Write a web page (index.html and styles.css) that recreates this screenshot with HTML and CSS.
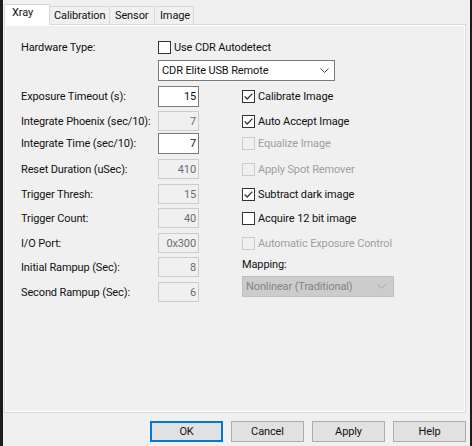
FILE: index.html
```html
<!DOCTYPE html>
<html>
<head>
<meta charset="utf-8">
<link rel="stylesheet" href="styles.css">
</head>
<body>
<div class="window">
  <div class="tabs">
    <div class="tab active t-xray">Xray</div>
    <div class="tab t-cal">Calibration</div>
    <div class="tab t-sen">Sensor</div>
    <div class="tab t-img">Image</div>
  </div>
  <div class="panel">
    <div class="form">
      <div class="lbl h13">Hardware Type:</div>
      <div class="chk h13 span2">
        <svg class="box" width="13" height="13" viewBox="0 0 13 13"><rect x="0.5" y="0.5" width="12" height="12" fill="#fff" stroke="#333"/></svg>
        <span>Use CDR Autodetect</span>
      </div>

      <div class="select">
        <span>CDR Elite USB Remote</span>
        <svg width="9" height="5" viewBox="0 0 9 5"><path d="M0.5 0.5 L4.5 4.5 L8.5 0.5" fill="none" stroke="#444"/></svg>
      </div>

      <div class="lbl h21">Exposure Timeout (s):</div>
      <div class="tb">15</div>
      <div class="chk h21">
        <svg class="box" width="13" height="13" viewBox="0 0 13 13"><rect x="0.5" y="0.5" width="12" height="12" fill="#fff" stroke="#333"/><path d="M2.6 6.4 L5.2 9 L10.4 3.6" fill="none" stroke="#333" stroke-width="1.3"/></svg>
        <span>Calibrate Image</span>
      </div>

      <div class="lbl">Integrate Phoenix (sec/10):</div>
      <div class="tb dis">7</div>
      <div class="chk">
        <svg class="box" width="13" height="13" viewBox="0 0 13 13"><rect x="0.5" y="0.5" width="12" height="12" fill="#fff" stroke="#333"/><path d="M2.6 6.4 L5.2 9 L10.4 3.6" fill="none" stroke="#333" stroke-width="1.3"/></svg>
        <span>Auto Accept Image</span>
      </div>

      <div class="lbl h21">Integrate Time (sec/10):</div>
      <div class="tb">7</div>
      <div class="chk h21 dis">
        <svg class="box" width="13" height="13" viewBox="0 0 13 13"><rect x="0.5" y="0.5" width="12" height="12" fill="#f0f0f0" stroke="#cccccc"/></svg>
        <span>Equalize Image</span>
      </div>

      <div class="lbl">Reset Duration (uSec):</div>
      <div class="tb dis">410</div>
      <div class="chk dis">
        <svg class="box" width="13" height="13" viewBox="0 0 13 13"><rect x="0.5" y="0.5" width="12" height="12" fill="#f0f0f0" stroke="#cccccc"/></svg>
        <span>Apply Spot Remover</span>
      </div>

      <div class="lbl">Trigger Thresh:</div>
      <div class="tb dis">15</div>
      <div class="chk">
        <svg class="box" width="13" height="13" viewBox="0 0 13 13"><rect x="0.5" y="0.5" width="12" height="12" fill="#fff" stroke="#333"/><path d="M2.6 6.4 L5.2 9 L10.4 3.6" fill="none" stroke="#333" stroke-width="1.3"/></svg>
        <span>Subtract dark image</span>
      </div>

      <div class="lbl">Trigger Count:</div>
      <div class="tb dis">40</div>
      <div class="chk">
        <svg class="box" width="13" height="13" viewBox="0 0 13 13"><rect x="0.5" y="0.5" width="12" height="12" fill="#fff" stroke="#333"/></svg>
        <span>Acquire 12 bit image</span>
      </div>

      <div class="lbl">I/O Port:</div>
      <div class="tb dis">0x300</div>
      <div class="chk dis">
        <svg class="box" width="13" height="13" viewBox="0 0 13 13"><rect x="0.5" y="0.5" width="12" height="12" fill="#f0f0f0" stroke="#cccccc"/></svg>
        <span>Automatic Exposure Control</span>
      </div>

      <div class="lbl">Initial Rampup (Sec):</div>
      <div class="tb dis">8</div>
      <div class="mapping">
        <div class="mapping-label">Mapping:</div>
        <div class="select dis">
          <span>Nonlinear (Traditional)</span>
          <svg width="9" height="5" viewBox="0 0 9 5"><path d="M0.5 0.5 L4.5 4.5 L8.5 0.5" fill="none" stroke="#a6a6a6"/></svg>
        </div>
      </div>

      <div class="lbl">Second Rampup (Sec):</div>
      <div class="tb dis">6</div>
    </div>
  </div>
  <div class="buttons">
    <div class="btn default">OK</div>
    <div class="btn">Cancel</div>
    <div class="btn">Apply</div>
    <div class="btn">Help</div>
  </div>
</div>
</body>
</html>
```

FILE: styles.css
```css
* { box-sizing: border-box; }

body {
  margin: 0;
  font-family: Roboto, "Liberation Sans", sans-serif;
  font-size: 11px;
  letter-spacing: -0.12px;
  color: #111;
  background: #f0f0f0;
}

.window {
  width: 472px;
  height: 446px;
  border-left: 3px solid #1d1d1d;
  border-right: 2px solid #1d1d1d;
  background: #f0f0f0;
  padding-top: 4px;
  display: flex;
  flex-direction: column;
}

.tabs {
  display: flex;
  align-items: flex-end;
  height: 20px;
  margin-left: 1px;
  position: relative;
  z-index: 1;
}

.tab {
  height: 18px;
  border: 1px solid #d9d9d9;
  border-bottom: none;
  background: #f0f0f0;
  line-height: 16px;
  padding-top: 1px;
  margin-left: -1px;
  white-space: nowrap;
}

.tab.active {
  height: 21px;
  background: #fff;
  margin-bottom: -1px;
  padding-top: 0;
}

.t-xray { width: 46px; padding-left: 7px; margin-left: 0; }
.t-cal { width: 61px; padding-left: 4px; }
.t-sen { width: 46px; padding-left: 5px; }
.t-img { width: 40px; padding-left: 5px; }

.panel {
  margin-left: 1px;
  width: 462px;
  height: 389px;
  border: 1px solid #d9d9d9;
  box-shadow: inset 0 0 0 1px #fff;
  padding: 16px 0 0 16px;
}

.form {
  display: grid;
  grid-template-columns: 137px 84px 1fr;
  grid-template-rows: 19px 26px 25px 22px 26px 25px 24px 25px 24px 25px 21px;
}

.lbl {
  display: flex;
  align-items: center;
  height: 20px;
  white-space: nowrap;
}

.h21 { height: 21px; }
.h13 { height: 13px; }

.chk {
  display: flex;
  align-items: center;
  gap: 3px;
  height: 20px;
  white-space: nowrap;
}

.chk.h21 { height: 21px; }
.chk.h13 { height: 13px; }
.chk.dis { color: #a0a0a0; }
.span2 { grid-column: 2 / 4; }

.box { flex: none; display: block; }

.tb {
  width: 41px;
  height: 21px;
  border: 1px solid #7a7a7a;
  background: #fff;
  display: flex;
  align-items: center;
  justify-content: flex-end;
  padding-right: 2px;
}

.tb.dis {
  height: 20px;
  border-color: #cccccc;
  background: #f0f0f0;
  color: #6d6d6d;
}

.select {
  grid-column: 2 / 4;
  justify-self: start;
  align-self: start;
  width: 177px;
  height: 21px;
  border: 1px solid #7a7a7a;
  background: #fff;
  display: flex;
  align-items: center;
  justify-content: space-between;
  padding: 0 5px 0 3px;
  white-space: nowrap;
}

.select svg { display: block; flex: none; }

.mapping {
  grid-row: span 2;
  display: flex;
  flex-direction: column;
  align-items: flex-start;
}

.mapping-label {
  height: 16px;
  line-height: 16px;
}

.select.dis {
  margin-top: 3px;
  width: 152px;
  background: #cccccc;
  border-color: #bfbfbf;
  color: #838383;
  padding-right: 7px;
}

.buttons {
  display: flex;
  justify-content: flex-end;
  gap: 8px;
  margin-top: 8px;
  padding-right: 4px;
}

.btn {
  width: 73px;
  height: 21px;
  border: 1px solid #adadad;
  background: #e1e1e1;
  display: flex;
  align-items: center;
  justify-content: center;
}

.btn.default {
  border: 2px solid #0078d7;
}
```
